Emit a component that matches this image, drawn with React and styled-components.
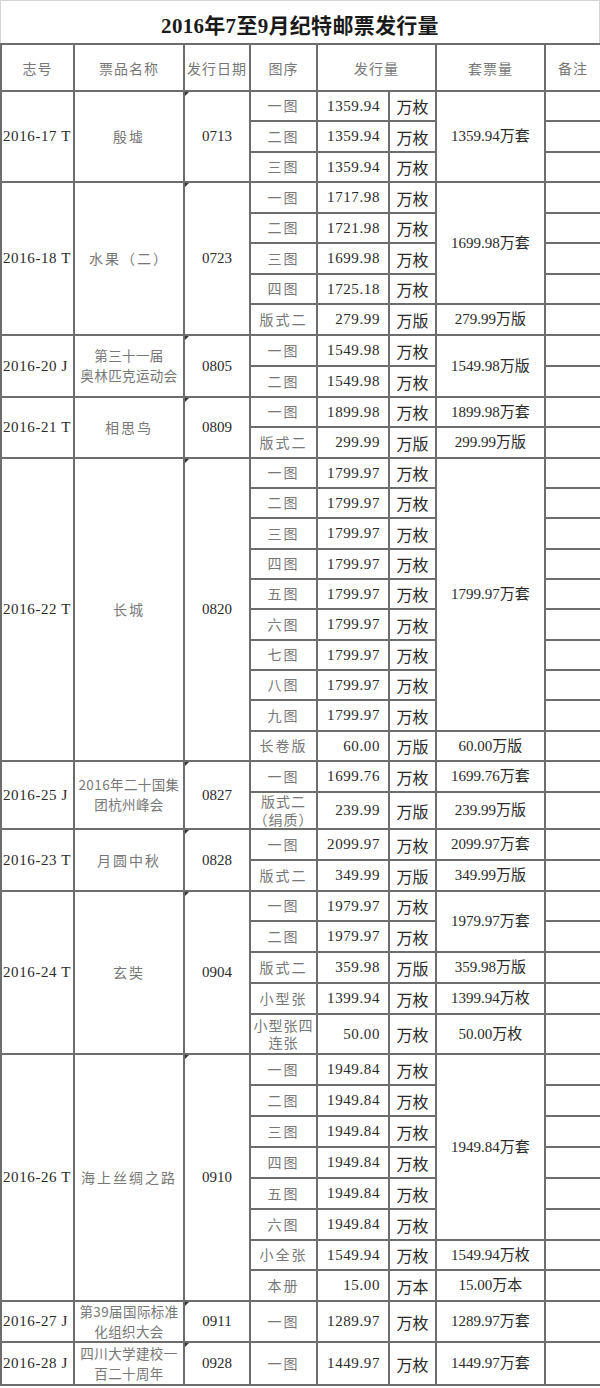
import React from "react";
import styled, { createGlobalStyle } from "styled-components";

const GlobalStyle = createGlobalStyle`
  html, body {
    margin: 0;
    padding: 0;
    background: #fff;
  }
  body {
    font-family: "Liberation Serif", "Noto Sans CJK SC", serif;
  }
`;

const Wrapper = styled.div`
  width: 600px;
  background: #fff;
`;

const TitleBar = styled.div`
  height: 43px;
  box-sizing: border-box;
  border: 1px solid #d4d4d4;
  border-bottom: none;
  display: flex;
  align-items: center;
  justify-content: center;
  padding-top: 4px;
`;

const Title = styled.h1`
  margin: 0;
  font-family: "Liberation Serif", "Noto Sans CJK SC", serif;
  font-size: 21px;
  font-weight: 700;
  color: #1a1a1a;
  letter-spacing: 0.3px;
`;

const Table = styled.table`
  width: 600px;
  table-layout: fixed;
  border-collapse: collapse;
  font-size: 14px;
`;

const Row = styled.tr`
  height: ${(p) => p.$h}px;
`;

const HeadCell = styled.th`
  border: 2px solid #6d6d6d;
  font-weight: 400;
  color: #777;
  font-family: "Noto Sans CJK SC", sans-serif;
  font-size: 14px;
  letter-spacing: 1px;
  text-align: center;
  vertical-align: middle;
  padding: 0;
`;

const Cell = styled.td`
  border: 2px solid #6d6d6d;
  padding: 0 ${(p) => (p.$align === "right" ? "8px" : "1px")} 0 1px;
  text-align: ${(p) => p.$align || "center"};
  vertical-align: middle;
  color: ${(p) => (p.$soft ? "#777" : "#2a2a2a")};
  font-family: ${(p) =>
    p.$cjk
      ? `"Noto Sans CJK SC", sans-serif`
      : `"Liberation Serif", "Noto Sans CJK SC", serif`};
  font-size: ${(p) => p.$size || 15}px;
  line-height: 1.25;
  letter-spacing: ${(p) => p.$spacing || 0}px;
  white-space: nowrap;
  overflow: hidden;
`;

const DateCell = styled(Cell)`
  position: relative;
  &::before {
    content: "";
    position: absolute;
    top: 0;
    left: 0;
    border-top: 4px solid #333;
    border-right: 4px solid transparent;
  }
`;

const Line = styled.div`
  display: block;
  line-height: ${(p) => p.$lh || 1.25};
`;

const M = "万枚";
const B = "万版";

const groups = [
  {
    code: "2016-17 T",
    name: ["殷墟"],
    date: "0713",
    heights: [30, 31, 30],
    rows: [
      ["一图", "1359.94", M],
      ["二图", "1359.94", M],
      ["三图", "1359.94", M],
    ],
    sets: [["1359.94万套", 3]],
  },
  {
    code: "2016-18 T",
    name: ["水果（二）"],
    date: "0723",
    heights: [31, 30, 31, 30, 31],
    rows: [
      ["一图", "1717.98", M],
      ["二图", "1721.98", M],
      ["三图", "1699.98", M],
      ["四图", "1725.18", M],
      ["版式二", "279.99", B],
    ],
    sets: [
      ["1699.98万套", 4],
      ["279.99万版", 1],
    ],
  },
  {
    code: "2016-20 J",
    name: ["第三十一届", "奥林匹克运动会"],
    date: "0805",
    heights: [31, 31],
    rows: [
      ["一图", "1549.98", M],
      ["二图", "1549.98", M],
    ],
    sets: [["1549.98万版", 2]],
  },
  {
    code: "2016-21 T",
    name: ["相思鸟"],
    date: "0809",
    heights: [30, 31],
    rows: [
      ["一图", "1899.98", M],
      ["版式二", "299.99", B],
    ],
    sets: [
      ["1899.98万套", 1],
      ["299.99万版", 1],
    ],
  },
  {
    code: "2016-22 T",
    name: ["长城"],
    date: "0820",
    heights: [30, 30, 31, 30, 30, 31, 30, 30, 31, 30],
    rows: [
      ["一图", "1799.97", M],
      ["二图", "1799.97", M],
      ["三图", "1799.97", M],
      ["四图", "1799.97", M],
      ["五图", "1799.97", M],
      ["六图", "1799.97", M],
      ["七图", "1799.97", M],
      ["八图", "1799.97", M],
      ["九图", "1799.97", M],
      ["长卷版", "60.00", B],
    ],
    sets: [
      ["1799.97万套", 9],
      ["60.00万版", 1],
    ],
  },
  {
    code: "2016-25 J",
    name: ["2016年二十国集", "团杭州峰会"],
    date: "0827",
    heights: [31, 37],
    rows: [
      ["一图", "1699.76", M],
      [["版式二", "（绢质）"], "239.99", B],
    ],
    sets: [
      ["1699.76万套", 1],
      ["239.99万版", 1],
    ],
  },
  {
    code: "2016-23 T",
    name: ["月圆中秋"],
    date: "0828",
    heights: [31, 31],
    rows: [
      ["一图", "2099.97", M],
      ["版式二", "349.99", B],
    ],
    sets: [
      ["2099.97万套", 1],
      ["349.99万版", 1],
    ],
  },
  {
    code: "2016-24 T",
    name: ["玄奘"],
    date: "0904",
    heights: [30, 31, 31, 31, 40],
    rows: [
      ["一图", "1979.97", M],
      ["二图", "1979.97", M],
      ["版式二", "359.98", B],
      ["小型张", "1399.94", M],
      [["小型张四", "连张"], "50.00", M],
    ],
    sets: [
      ["1979.97万套", 2],
      ["359.98万版", 1],
      ["1399.94万枚", 1],
      ["50.00万枚", 1],
    ],
  },
  {
    code: "2016-26 T",
    name: ["海上丝绸之路"],
    date: "0910",
    heights: [31, 31, 31, 31, 31, 31, 30, 31],
    rows: [
      ["一图", "1949.84", M],
      ["二图", "1949.84", M],
      ["三图", "1949.84", M],
      ["四图", "1949.84", M],
      ["五图", "1949.84", M],
      ["六图", "1949.84", M],
      ["小全张", "1549.94", M],
      ["本册", "15.00", "万本"],
    ],
    sets: [
      ["1949.84万套", 6],
      ["1549.94万枚", 1],
      ["15.00万本", 1],
    ],
  },
  {
    code: "2016-27 J",
    name: ["第39届国际标准", "化组织大会"],
    date: "0911",
    heights: [41],
    rows: [["一图", "1289.97", M]],
    sets: [["1289.97万套", 1]],
  },
  {
    code: "2016-28 J",
    name: ["四川大学建校一", "百二十周年"],
    date: "0928",
    heights: [43],
    rows: [["一图", "1449.97", M]],
    sets: [["1449.97万套", 1]],
  },
];

function Lines({ items, lh }) {
  const list = Array.isArray(items) ? items : [items];
  return list.map((t, i) => (
    <Line key={i} $lh={lh}>
      {t}
    </Line>
  ));
}

function GroupRows({ group }) {
  const n = group.rows.length;
  const setStarts = {};
  let idx = 0;
  group.sets.forEach(([text, span]) => {
    setStarts[idx] = { text, span };
    idx += span;
  });
  const longName = group.name.length > 1;

  return group.rows.map(([seq, qty, unit], i) => {
    const set = setStarts[i];
    return (
      <Row key={i} $h={group.heights[i]}>
        {i === 0 && (
          <>
            <Cell rowSpan={n} $align="left" $size={15} $spacing={0.6}>
              {group.code}
            </Cell>
            <Cell
              rowSpan={n}
              $cjk
              $soft
              $size={longName ? 13.5 : 14}
              $spacing={longName ? 0.4 : 2}
            >
              <Lines items={group.name} lh={1.45} />
            </Cell>
            <DateCell rowSpan={n} $size={15}>
              {group.date}
            </DateCell>
          </>
        )}
        <Cell $cjk $soft $size={14} $spacing={Array.isArray(seq) ? 1 : 2}>
          <Lines items={seq} />
        </Cell>
        <Cell $align="right" $size={15} $spacing={0.6}>
          {qty}
        </Cell>
        <Cell $cjk $size={16}>
          {unit}
        </Cell>
        {set && (
          <Cell rowSpan={set.span} $size={15}>
            {set.text}
          </Cell>
        )}
        <Cell />
      </Row>
    );
  });
}

function App() {
  return (
    <Wrapper>
      <GlobalStyle />
      <TitleBar>
        <Title>2016年7至9月纪特邮票发行量</Title>
      </TitleBar>
      <Table>
        <colgroup>
          <col style={{ width: 73 }} />
          <col style={{ width: 110 }} />
          <col style={{ width: 66 }} />
          <col style={{ width: 67 }} />
          <col style={{ width: 72 }} />
          <col style={{ width: 47 }} />
          <col style={{ width: 109 }} />
          <col style={{ width: 56 }} />
        </colgroup>
        <thead>
          <Row $h={47}>
            <HeadCell>志号</HeadCell>
            <HeadCell>票品名称</HeadCell>
            <HeadCell>发行日期</HeadCell>
            <HeadCell>图序</HeadCell>
            <HeadCell colSpan={2}>发行量</HeadCell>
            <HeadCell>套票量</HeadCell>
            <HeadCell>备注</HeadCell>
          </Row>
        </thead>
        <tbody>
          {groups.map((g) => (
            <GroupRows key={g.code} group={g} />
          ))}
        </tbody>
      </Table>
    </Wrapper>
  );
}

export default App;
